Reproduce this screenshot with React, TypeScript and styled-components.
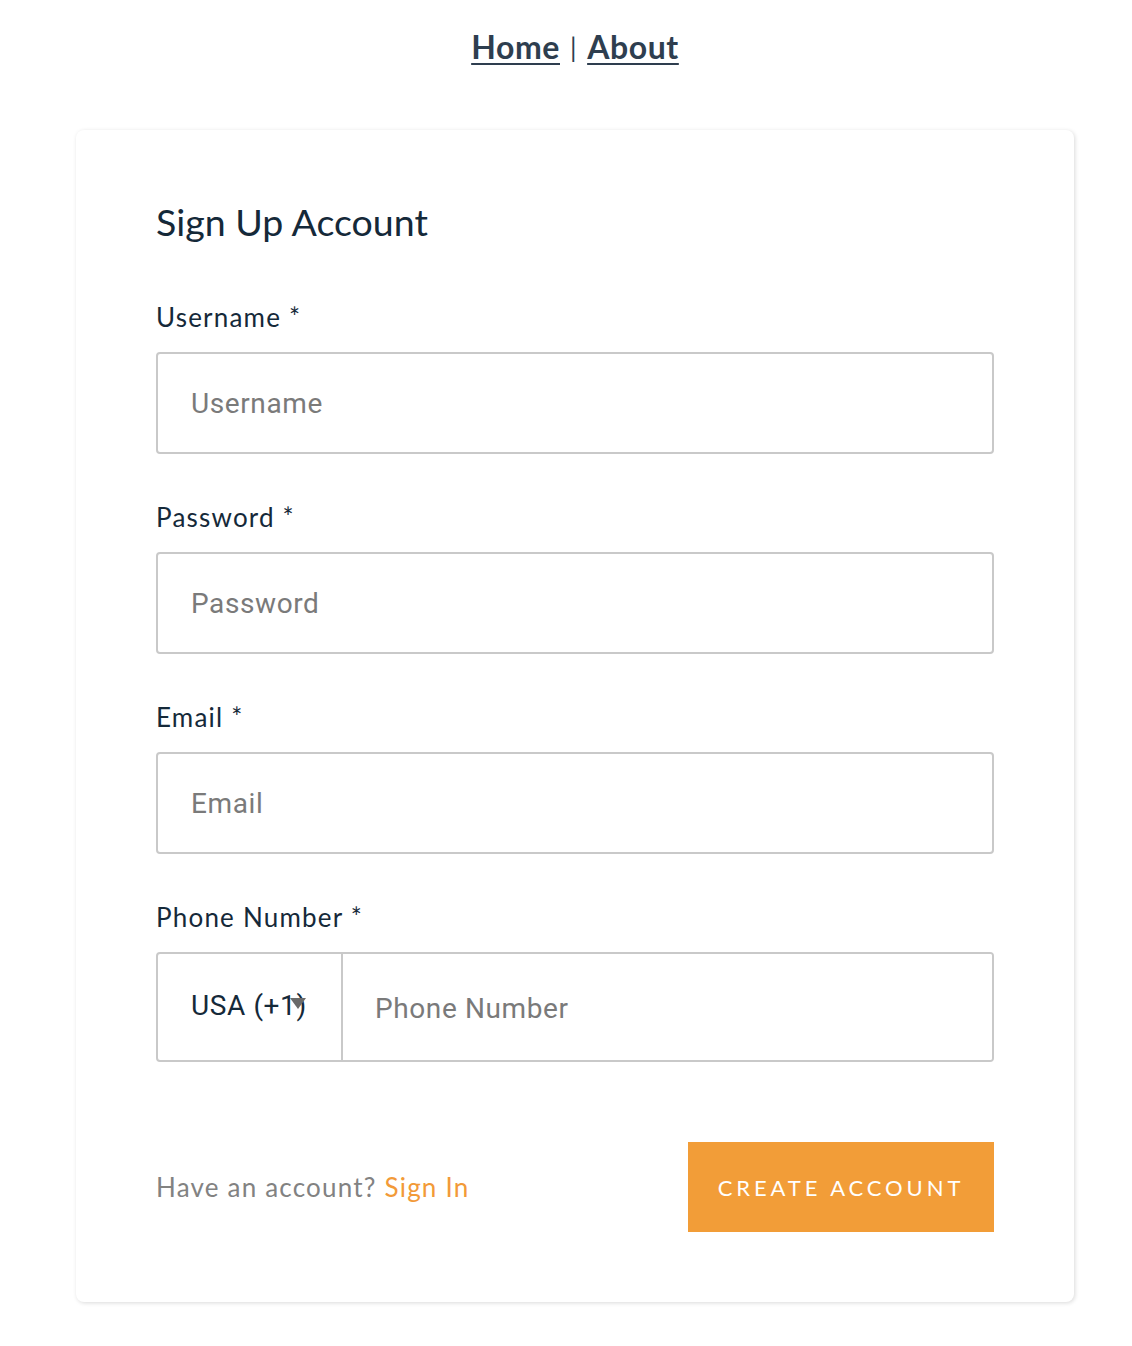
import React from "react";
import styled, { createGlobalStyle } from "styled-components";

const Global = createGlobalStyle`
  html, body { margin: 0; padding: 0; background: #ffffff; }
  body { font-family: Lato, "Noto Sans", sans-serif; color: #152939; }
  * { box-sizing: border-box; }
`;

const Page = styled.div`
  display: flex;
  flex-direction: column;
  align-items: center;
  padding: 27px 0 44px 18px;
`;

const Nav = styled.nav`
  display: flex;
  align-items: center;
  gap: 10px;
  font-family: Lato, "Noto Sans", sans-serif;
  font-weight: 700;
  font-size: 32px;
  line-height: 40px;
  letter-spacing: 0.6px;
  color: #2e3e4f;
`;

const NavLink = styled.a`
  color: #2e3e4f;
  text-decoration: underline;
  text-decoration-thickness: 2px;
  text-underline-offset: 4px;
`;

const Sep = styled.span`
  font-weight: 400;
  font-size: 26px;
`;

const Card = styled.div`
  margin-top: 63px;
  width: 998px;
  background: #ffffff;
  border-radius: 8px;
  box-shadow: 1px 1px 4px 0 rgba(0, 0, 0, 0.15);
  padding: 70px 80px 70px 80px;
`;

const Title = styled.h1`
  margin: 0 0 58px 0;
  font-family: Lato, "Noto Sans", sans-serif;
  font-weight: 400;
  font-size: 37.5px;
  line-height: 44px;
  color: #152939;
`;

const Field = styled.div`
  display: flex;
  flex-direction: column;
  margin-bottom: 48px;
`;

const Label = styled.label`
  font-family: Lato, "Noto Sans", sans-serif;
  font-size: 26px;
  line-height: 30px;
  letter-spacing: 1.2px;
  color: #152939;
  margin-bottom: 20px;
`;

const Input = styled.input`
  width: 100%;
  height: 102px;
  border: 2px solid #c9c9c9;
  border-radius: 4px;
  padding: 0 33px;
  font-family: Roboto, "Liberation Sans", sans-serif;
  font-size: 28px;
  letter-spacing: 0.6px;
  color: #152939;
  background: #fff;
  outline: none;
  &::placeholder { color: #7a7a7a; }
`;

const PhoneGroup = styled.div`
  display: flex;
  height: 110px;
  border: 2px solid #c9c9c9;
  border-radius: 4px;
  overflow: hidden;
`;

const CountrySelect = styled.div`
  position: relative;
  width: 185px;
  flex: none;
  display: flex;
  align-items: center;
  padding-left: 33px;
  padding-bottom: 4px;
  border-right: 2px solid #c9c9c9;
  font-family: Roboto, "Liberation Sans", sans-serif;
  font-size: 28px;
  letter-spacing: 0.6px;
  color: #152939;
`;

const Caret = styled.span`
  position: absolute;
  left: 132px;
  top: 44px;
  width: 0;
  height: 0;
  border-left: 8px solid transparent;
  border-right: 8px solid transparent;
  border-top: 11px solid #6a6a6a;
`;

const PhoneInput = styled.input`
  flex: 1;
  border: none;
  outline: none;
  padding: 0 32px;
  font-family: Roboto, "Liberation Sans", sans-serif;
  font-size: 28px;
  letter-spacing: 0.6px;
  color: #152939;
  padding-top: 2px;
  &::placeholder { color: #7a7a7a; }
`;

const Footer = styled.div`
  display: flex;
  justify-content: space-between;
  align-items: center;
  margin-top: 80px;
`;

const Hint = styled.span`
  font-family: Lato, "Noto Sans", sans-serif;
  font-size: 26px;
  letter-spacing: 1.2px;
  color: #828282;
`;

const SignIn = styled.a`
  color: #f29a38;
  text-decoration: none;
`;

const Button = styled.button`
  width: 306px;
  height: 90px;
  border: none;
  background: #f29d38;
  color: #ffffff;
  font-family: Lato, "Noto Sans", sans-serif;
  font-size: 22px;
  letter-spacing: 3.9px;
  text-transform: uppercase;
  padding: 0;
`;

const fields = [
  { label: "Username", placeholder: "Username", type: "text" },
  { label: "Password", placeholder: "Password", type: "password" },
  { label: "Email", placeholder: "Email", type: "email" },
];

export default function App() {
  return (
    <>
      <Global />
      <Page>
        <Nav>
          <NavLink href="#">Home</NavLink>
          <Sep>|</Sep>
          <NavLink href="#">About</NavLink>
        </Nav>
        <Card>
          <Title>Sign Up Account</Title>
          {fields.map((f) => (
            <Field key={f.label}>
              <Label>{f.label} *</Label>
              <Input type={f.type} placeholder={f.placeholder} />
            </Field>
          ))}
          <Field>
            <Label>Phone Number *</Label>
            <PhoneGroup>
              <CountrySelect>
                USA (+1)
                <Caret />
              </CountrySelect>
              <PhoneInput placeholder="Phone Number" />
            </PhoneGroup>
          </Field>
          <Footer>
            <Hint>
              Have an account? <SignIn href="#">Sign In</SignIn>
            </Hint>
            <Button>Create Account</Button>
          </Footer>
        </Card>
      </Page>
    </>
  );
}
